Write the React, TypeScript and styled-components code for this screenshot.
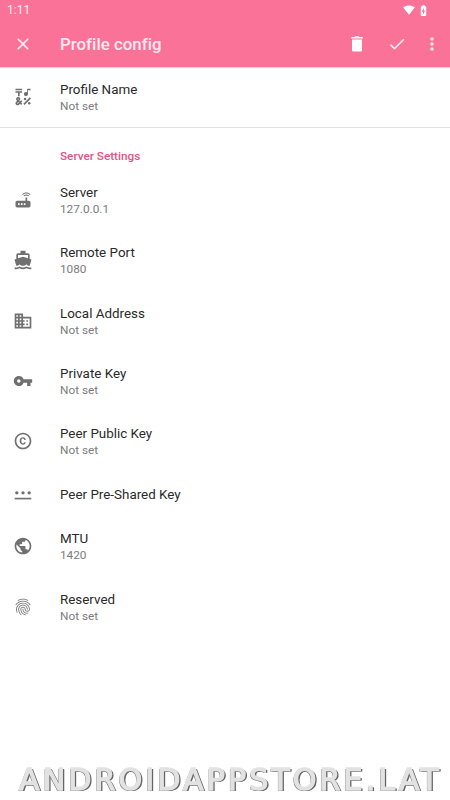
import React from "react";
import styled, { createGlobalStyle } from "styled-components";
import {
  MdEmojiSymbols, MdRouter, MdDirectionsBoat, MdDomain, MdVpnKey, MdCopyright,
  MdPublic, MdFingerprint, MdClose, MdDone, MdMoreVert, MdSignalWifi4Bar, MdBatteryChargingFull,
} from "react-icons/md";

const GlobalStyle = createGlobalStyle`
  body { margin: 0; background: #fff; font-family: Roboto, sans-serif; }
`;

const Screen = styled.div`
  display: flex;
  flex-direction: column;
  height: 800px;
  width: 450px;
  overflow: hidden;
  background: #fff;
`;

const Header = styled.header`
  flex: none;
  height: 66.5px;
  background: #fb7299;
  color: #ffeaf0;
  box-shadow: 0 1px 1px rgba(150, 60, 90, 0.2);
`;

const StatusBar = styled.div`
  display: flex;
  align-items: center;
  height: 20px;
  padding: 0 20px 0 7px;
  font-size: 12px;
`;

const Clock = styled.span`
  flex: 1;
  line-height: 20px;
`;

const StatusIcons = styled.div`
  display: flex;
  align-items: center;
  gap: 2px;
  color: #fff;
`;

const Toolbar = styled.div`
  display: flex;
  align-items: center;
  height: 47px;
  padding: 0 8px 0 13px;
`;

const Title = styled.h1`
  flex: 1;
  margin: 0 0 0 27px;
  font-size: 16.8px;
  font-weight: 500;
  line-height: 24px;
  letter-spacing: 0.05px;
`;

const Actions = styled.div`
  display: grid;
  grid-template-columns: 40px 35px 20px;
  align-items: center;
`;

const Row = styled.div<{ $height: number }>`
  flex: none;
  display: flex;
  align-items: center;
  height: ${(p) => p.$height}px;
  padding-left: 13.3px;
`;

const RowIcon = styled.div`
  display: flex;
  width: 46.7px;
  color: #707070;
`;

const RowText = styled.div`
  display: flex;
  flex-direction: column;
  padding-top: 1.2px;
`;

const Name = styled.span`
  font-size: 13.4px;
  line-height: 17px;
  color: #2a2a2a;
`;

const Value = styled.span`
  font-size: 11.8px;
  line-height: 16px;
  color: #7c7c7c;
`;

const ProfileSection = styled.section`
  flex: none;
  height: 61.2px;
  box-sizing: border-box;
  border-bottom: 1px solid #e1e1e1;
`;

const SectionTitle = styled.h2`
  flex: none;
  height: 41.9px;
  margin: 0;
  padding: 20.2px 0 0 60px;
  box-sizing: border-box;
  font-size: 11.75px;
  line-height: 16px;
  font-weight: 500;
  color: #e25384;
`;

const Watermark = styled.div`
  margin: auto 0 -1px;
  padding-left: 19px;
  height: 42px;
  font: 30px/42px "DejaVu Sans", sans-serif;
  letter-spacing: 3.15px;
  white-space: nowrap;
  color: #e2e2e2;
  -webkit-text-stroke: 1.4px #e2e2e2;
  text-shadow: 1px 1px 0 #666, 2px 1px 0 #666, -1px 1px 0 #777;
  will-change: transform;
`;

type IconProps = { size?: number };

const TrashIcon = () => (
  <svg width="20" height="20" viewBox="0 0 20 20" fill="#fff">
    <path d="M4.200 4.400V3.100h3.300l1-.9h3l1 .9h3.300v1.300zM5 5.400h10v10.800q0 1.200-1.200 1.200H6.200Q5 17.400 5 16.200z" />
  </svg>
);

const PasswordIcon = ({ size = 20 }: IconProps) => (
  <svg width={size} height={size} viewBox="0 0 24 24" fill="currentColor">
    <path d="M2 16.500h20v2H2z" />
    <circle cx="4.600" cy="10.600" r="2" />
    <circle cx="12" cy="10.600" r="2" />
    <circle cx="19.400" cy="10.600" r="2" />
  </svg>
);

type Setting = { icon: React.ComponentType<IconProps>; name: string; value?: string };

const profile: Setting = { icon: MdEmojiSymbols, name: "Profile Name", value: "Not set" };

const serverSettings: Setting[] = [
  { icon: MdRouter, name: "Server", value: "127.0.0.1" },
  { icon: MdDirectionsBoat, name: "Remote Port", value: "1080" },
  { icon: MdDomain, name: "Local Address", value: "Not set" },
  { icon: MdVpnKey, name: "Private Key", value: "Not set" },
  { icon: MdCopyright, name: "Peer Public Key", value: "Not set" },
  { icon: PasswordIcon, name: "Peer Pre-Shared Key" },
  { icon: MdPublic, name: "MTU", value: "1420" },
  { icon: MdFingerprint, name: "Reserved", value: "Not set" },
];

const SettingRow = ({ icon: Icon, name, value }: Setting) => (
  <Row $height={value ? 60.4 : 44.6}>
    <RowIcon><Icon size={20} /></RowIcon>
    <RowText>
      <Name>{name}</Name>
      {value && <Value>{value}</Value>}
    </RowText>
  </Row>
);

export default function App() {
  return (
    <Screen>
      <GlobalStyle />
      <Header>
        <StatusBar>
          <Clock>1:11</Clock>
          <StatusIcons>
            <MdSignalWifi4Bar size={12} />
            <MdBatteryChargingFull size={13} />
          </StatusIcons>
        </StatusBar>
        <Toolbar>
          <MdClose size={20} />
          <Title>Profile config</Title>
          <Actions>
            <TrashIcon />
            <MdDone size={20} />
            <MdMoreVert size={20} />
          </Actions>
        </Toolbar>
      </Header>
      <ProfileSection>
        <SettingRow {...profile} />
      </ProfileSection>
      <SectionTitle>Server Settings</SectionTitle>
      {serverSettings.map((s) => <SettingRow key={s.name} {...s} />)}
      <Watermark>ANDROIDAPPSTORE.LAT</Watermark>
    </Screen>
  );
}
